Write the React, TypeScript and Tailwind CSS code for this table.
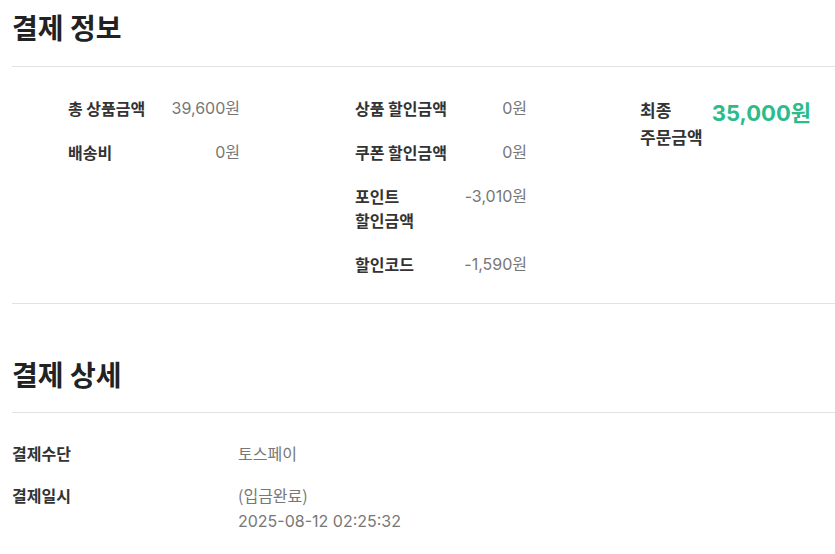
const kr = "font-['Noto_Sans_CJK_KR','Noto_Sans',sans-serif]";
const num = "font-['Inter','Noto_Sans_CJK_KR',sans-serif]";

type Item = { label: string; value: string };

const col1: Item[] = [
  { label: "총 상품금액", value: "39,600원" },
  { label: "배송비", value: "0원" },
];

const col2: Item[] = [
  { label: "상품 할인금액", value: "0원" },
  { label: "쿠폰 할인금액", value: "0원" },
  { label: "포인트 할인금액", value: "-3,010원" },
  { label: "할인코드", value: "-1,590원" },
];

function SummaryColumn({ items }: { items: Item[] }) {
  return (
    <div className="flex w-[172px] flex-col gap-5">
      {items.map((it) => (
        <div key={it.label} className="flex items-start justify-between">
          <span className="w-[100px] break-keep text-base font-semibold leading-6 text-[#333]">
            {it.label}
          </span>
          <span className={`${num} whitespace-nowrap text-base leading-6 text-[#777]`}>
            {it.value}
          </span>
        </div>
      ))}
    </div>
  );
}

export default function App() {
  return (
    <div className={`${kr} w-[835px] bg-white pl-3`}>
      <h2 className="border-b border-[#e2e2e2] pt-[7px] pb-[19px] text-[28px] font-bold leading-10 text-[#222]">
        결제 정보
      </h2>

      <div className="flex gap-[115px] border-b border-[#e2e2e2] pt-[29px] pb-[27px] pl-14">
        <SummaryColumn items={col1} />
        <SummaryColumn items={col2} />
        <div className="-ml-[2px] flex w-[171px] items-start justify-between">
          <span className="w-[72px] break-keep text-[17px] font-bold leading-[27px] text-[#333]">
            최종 주문금액
          </span>
          <span
            className={`${num} shrink-0 whitespace-nowrap text-[22px] font-bold leading-[34px] text-[#2cbb8b]`}
          >
            35,000원
          </span>
        </div>
      </div>

      <h2 className="mt-[50px] border-b border-[#e2e2e2] pb-[18px] text-[28px] font-bold leading-10 text-[#222]">
        결제 상세
      </h2>

      <div className="flex flex-col gap-4 pt-[27px] text-base leading-[26px]">
        <div className="flex">
          <span className="w-[226px] font-semibold text-[#333]">결제수단</span>
          <span className="text-[#777]">토스페이</span>
        </div>
        <div className="flex">
          <span className="w-[226px] font-semibold text-[#333]">결제일시</span>
          <div className="flex flex-col text-[#777]">
            <span>(입금완료)</span>
            <span className={num}>2025-08-12 02:25:32</span>
          </div>
        </div>
      </div>
    </div>
  );
}
